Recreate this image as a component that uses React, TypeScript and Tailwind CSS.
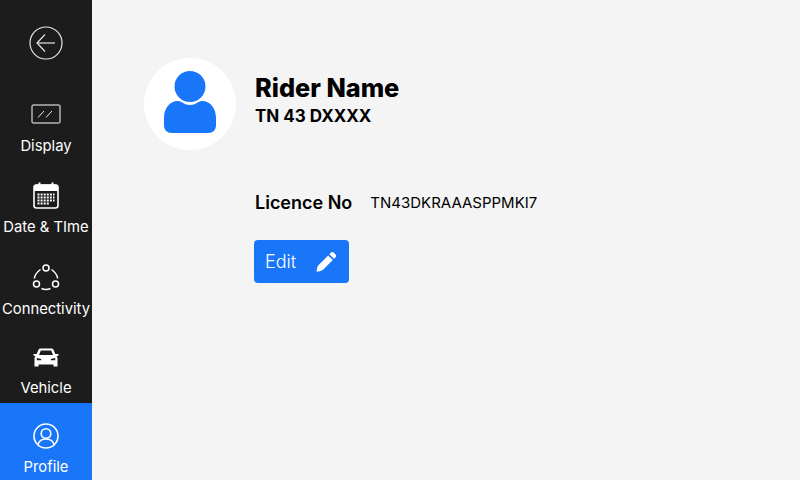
import React from "react";

const font = { fontFamily: 'Inter, "Open Sans", sans-serif' };

const BackIcon = () => (
  <svg width="34" height="34" viewBox="0 0 34 34" fill="none" stroke="#e5e5e5" strokeWidth="1.2">
    <circle cx="17" cy="17" r="16" />
    <path d="M8 17H26" stroke="#a3a3a3" strokeWidth="1.8" />
    <path d="M16 8.5L8 17L16 25.5" strokeWidth="1.2" />
  </svg>
);

const DisplayIcon = () => (
  <svg width="30" height="20" viewBox="0 0 30 20" fill="none" stroke="white">
    <rect x="1" y="1" width="28" height="18" rx="1" />
    <path d="M7 13.5L13 7M15 13.5L21 7" stroke="#ececec" />
  </svg>
);

const CalendarIcon = () => (
  <svg width="26" height="27" viewBox="0 0 26 27" fill="none">
    <rect x="1" y="3" width="24" height="23" rx="2.5" stroke="white" strokeWidth="1.6" />
    <path d="M1 4.5a2 2 0 0 1 2-2h20a2 2 0 0 1 2 2V9H1z" fill="white" />
    <path d="M6.5 0.5V5M19.5 0.5V5" stroke="white" strokeWidth="2" />
    <path
      d="M4.5 12.5h17M4.5 15.5h17M4.5 18.5h17M4.5 21.5h12"
      stroke="white"
      strokeWidth="1.8"
      strokeDasharray="2 1.1"
    />
  </svg>
);

const ConnectivityIcon = () => (
  <svg width="28" height="27" viewBox="0 0 28 27" fill="none" stroke="white" strokeWidth="1.5">
    <circle cx="14" cy="4" r="3" />
    <circle cx="4.5" cy="20" r="3" />
    <circle cx="23.5" cy="20" r="3" />
    <path d="M8.5 5.5C5 8 2.8 11 2.3 14.5M19.5 5.5C23 8 25.2 11 25.7 14.5M9.5 24.5C12 25.5 16 25.5 18.5 24.5" />
  </svg>
);

const CarIcon = () => (
  <svg width="26" height="19" viewBox="0 0 26 19" fill="white">
    <path
      fillRule="evenodd"
      d="M7.5 0.5H18.5C19.5 0.5 20.2 1 20.6 2L22.3 6H25.5V7.5L23.6 8.2C24.3 9 24.5 9.8 24.5 10.5V18.5H20.5V16.5H5.5V18.5H1.5V10.5C1.5 9.8 1.7 9 2.4 8.2L0.5 7.5V6H3.7L5.4 2C5.8 1 6.5 0.5 7.5 0.5ZM7.8 2.5L6 7H20L18.2 2.5ZM3.8 10V12.2H8.2V11ZM22.2 10L17.8 11V12.2H22.2Z"
    />
  </svg>
);

const ProfileIcon = () => (
  <svg width="26" height="26" viewBox="0 0 26 26" fill="none" stroke="white" strokeWidth="1.6">
    <circle cx="13" cy="13" r="12" />
    <circle cx="13" cy="10.5" r="4.8" />
    <path d="M5 21.5C6 18 9 16 13 16C17 16 20 18 21 21.5" />
  </svg>
);

const PersonIcon = () => (
  <svg width="52" height="62" viewBox="0 0 52 62" fill="#1a76f8">
    <circle cx="26" cy="15.5" r="15.5" />
    <path d="M0 47C0 38 5 30 14 30C18 30 20 34 26 34C32 34 34 30 38 30C47 30 52 38 52 47V54C52 59 49 62 44 62H8C3 62 0 59 0 54Z" />
  </svg>
);

const PencilIcon = () => (
  <svg width="21" height="21" viewBox="0 0 21 21" fill="white">
    <path d="M15 1.6C15.8 0.8 17 0.8 17.8 1.6L19.6 3.4C20.4 4.2 20.4 5.4 19.6 6.2L18 7.8L13.4 3.2ZM12.2 4.4L16.8 9L7 18.8C5.5 20 2.5 20.6 0.6 20.8C0.7 18.8 1.2 15.6 2.4 14.2Z" />
  </svg>
);

const NavItem = ({
  icon,
  label,
  className,
}: {
  icon: React.ReactNode;
  label: string;
  className: string;
}) => (
  <div className={`flex flex-col items-center ${className}`}>
    <div className="flex h-[28px] items-center justify-center">{icon}</div>
    <span className="whitespace-nowrap text-[14.8px] leading-[20px] text-white">{label}</span>
  </div>
);

export default function App() {
  return (
    <div className="flex h-[480px] w-[800px] overflow-hidden bg-[#f4f4f4]" style={font}>
      <aside className="flex h-full w-[92px] shrink-0 flex-col bg-[#1c1c1c]">
        <div className="flex h-[100px] items-start justify-center pt-[26px]">
          <BackIcon />
        </div>
        <NavItem icon={<DisplayIcon />} label="Display" className="h-[81px] gap-[8px]" />
        <NavItem icon={<CalendarIcon />} label="Date & TIme" className="h-[82px] gap-[8px]" />
        <NavItem icon={<ConnectivityIcon />} label="Connectivity" className="h-[80px] gap-[8px]" />
        <NavItem icon={<CarIcon />} label="Vehicle" className="h-[60px] gap-[7px]" />
        <NavItem icon={<ProfileIcon />} label="Profile" className="h-[77px] gap-[7px] bg-[#1a76f8] pt-[19px]" />
      </aside>
      <main className="flex-1 pl-[52px] pt-[58px]">
        <div className="flex items-center gap-[19px]">
          <div className="flex h-[92px] w-[92px] items-center justify-center rounded-full bg-white pb-[4px]">
            <PersonIcon />
          </div>
          <div className="pb-[9px] text-black">
            <div className="text-[25.3px] font-extrabold leading-[32px]">Rider Name</div>
            <div className="text-[17px] font-bold leading-[24px]">TN 43 DXXXX</div>
          </div>
        </div>
        <div className="ml-[111px] mt-[41px] flex items-center gap-[18px] text-black">
          <span className="text-[18px] font-semibold leading-[24px]">Licence No</span>
          <span className="text-[15px] leading-[24px]">TN43DKRAAASPPMKI7</span>
        </div>
        <button className="ml-[110px] mt-[25px] flex h-[43px] w-[95px] items-center justify-between rounded-[4px] bg-[#1a76f8] pl-[11px] pr-[12px] text-[18px] font-light text-white">
          Edit
          <PencilIcon />
        </button>
      </main>
    </div>
  );
}
